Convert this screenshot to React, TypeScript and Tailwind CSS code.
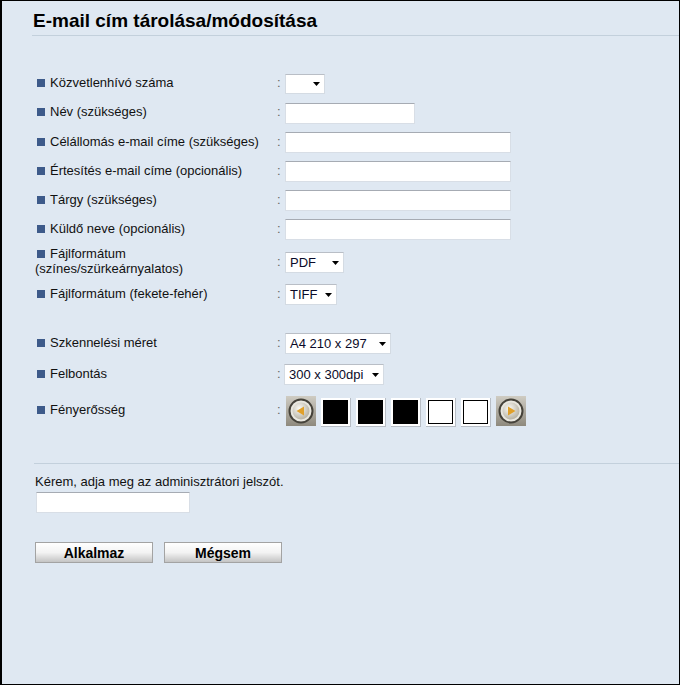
import React from 'react';

const Caret = () => (
  <svg width="7" height="4" viewBox="0 0 7 4" className="shrink-0">
    <path d="M0 0h7L3.5 4z" fill="#000" />
  </svg>
);

function FakeSelect({ value, width }: { value: string; width: string }) {
  return (
    <div
      className={`${width} h-[21px] bg-white border border-[#d4dbe3] border-t-[#b9bec6] flex items-center justify-between pl-[4px] pr-[4px] text-[13px] text-[#0a0a28]`}
    >
      <span>{value}</span>
      <Caret />
    </div>
  );
}

function ArrowButton({ dir }: { dir: 'left' | 'right' }) {
  const id = `g-${dir}`;
  return (
    <svg width="30" height="30" viewBox="0 0 30 30" className="shrink-0">
      <defs>
        <linearGradient id={`${id}-bg`} x1="0" y1="0" x2="0" y2="1">
          <stop offset="0" stopColor="#cfccc3" />
          <stop offset="1" stopColor="#8e897d" />
        </linearGradient>
        <radialGradient id={`${id}-in`} cx="0.4" cy="0.35" r="0.7">
          <stop offset="0" stopColor="#fbfaf5" />
          <stop offset="1" stopColor="#b3ae9f" />
        </radialGradient>
      </defs>
      <rect width="30" height="30" fill={`url(#${id}-bg)`} />
      <circle cx="15" cy="15" r="11.5" fill="#e9e7df" stroke="#45423a" strokeWidth="2" />
      <circle cx="15" cy="15" r="8.5" fill={`url(#${id}-in)`} />
      {dir === 'left' ? (
        <path d="M10.5 15L18 10.5v9z" fill="#e0a02a" />
      ) : (
        <path d="M19.5 15L12 10.5v9z" fill="#e0a02a" />
      )}
    </svg>
  );
}

function Row({
  label,
  height,
  children,
}: {
  label: React.ReactNode;
  height: string;
  children: React.ReactNode;
}) {
  return (
    <div className={`flex items-center ${height}`}>
      <div className="w-[242px] mb-[3px] leading-[15px] text-[13px] text-[#111]">
        <span className="inline-block w-[8px] h-[8px] bg-[#3d5a8a] ml-[2px] mr-[5px]"></span>
        {label}
      </div>
      <div className="w-[8px] text-[13px] text-[#666] mb-[2px]">:</div>
      {children}
    </div>
  );
}

const inputCls =
  'h-[21px] bg-white border border-[#d8dee6] border-t-[#a6abb3] outline-none';

export default function App() {
  const levels = [true, true, true, false, false];

  return (
    <div className="w-[680px] h-[685px] bg-[#dfe8f2] border-t border-r border-b border-l-2 border-black font-['Liberation_Sans',Arial,sans-serif] text-black">
      {/* Fejléc */}
      <h1 className="pl-[31px] pt-[9px] text-[19px] leading-[22px] font-bold">
        E-mail cím tárolása/módosítása
      </h1>
      <div className="ml-[30px] mt-[3px] h-px bg-[#c3d0dc]"></div>

      {/* Űrlap */}
      <div className="pl-[33px] mt-[34px]">
        <Row label="Közvetlenhívó száma" height="h-[28px]">
          <div className="w-[40px] h-[20px] bg-white border border-[#d4dbe3] border-t-[#b9bec6] flex items-center justify-end pr-[4px]">
            <Caret />
          </div>
        </Row>
        <Row label="Név (szükséges)" height="h-[30px]">
          <input className={`${inputCls} w-[130px] h-[20px]`} />
        </Row>
        <Row label="Célállomás e-mail címe (szükséges)" height="h-[29px]">
          <input className={`${inputCls} w-[226px]`} />
        </Row>
        <Row label="Értesítés e-mail címe (opcionális)" height="h-[29px]">
          <input className={`${inputCls} w-[226px]`} />
        </Row>
        <Row label="Tárgy (szükséges)" height="h-[29px]">
          <input className={`${inputCls} w-[226px]`} />
        </Row>
        <Row label="Küldő neve (opcionális)" height="h-[29px]">
          <input className={`${inputCls} w-[226px]`} />
        </Row>
        <Row
          label={
            <>
              Fájlformátum
              <br />
              (színes/szürkeárnyalatos)
            </>
          }
          height="h-[37px]"
        >
          <FakeSelect value="PDF" width="w-[59px]" />
        </Row>
        <Row label="Fájlformátum (fekete-fehér)" height="h-[27px]">
          <FakeSelect value="TIFF" width="w-[52px]" />
        </Row>

        <div className="h-[21px]"></div>

        <Row label="Szkennelési méret" height="h-[29px]">
          <FakeSelect value="A4 210 x 297" width="w-[106px]" />
        </Row>
        <Row label="Felbontás" height="h-[33px]">
          <div className="-ml-px">
            <FakeSelect value="300 x 300dpi" width="w-[100px]" />
          </div>
        </Row>
        <Row label="Fényerősség" height="h-[40px]">
          <div className="flex items-center gap-[5px] ml-px">
            <ArrowButton dir="left" />
            {levels.map((on, i) => (
              <div
                key={i}
                className="w-[30px] h-[29px] mt-[3px] bg-white p-[2px] border-b border-r border-[#b8bec6]"
              >
                <div
                  className={`w-full h-full border border-black ${on ? 'bg-black' : 'bg-white'}`}
                ></div>
              </div>
            ))}
            <ArrowButton dir="right" />
          </div>
        </Row>
      </div>

      {/* Jelszó */}
      <div className="ml-[32px] mt-[32px] h-px bg-[#c3d0dc]"></div>
      <div className="pl-[33px]">
        <p className="mt-[10px] text-[13px] leading-[15px] text-[#111]">
          Kérem, adja meg az adminisztrátori jelszót.
        </p>
        <input type="password" className={`${inputCls} w-[154px] mt-[3px] ml-px block`} />

        <div className="flex gap-[11px] mt-[29px]">
          <button className="w-[118px] h-[21px] border border-[#a3a3a3] bg-gradient-to-b from-white via-[#f3f3f3] to-[#c4c4c4] text-[14px] font-bold leading-none">
            Alkalmaz
          </button>
          <button className="w-[118px] h-[21px] border border-[#a3a3a3] bg-gradient-to-b from-white via-[#f3f3f3] to-[#c4c4c4] text-[14px] font-bold leading-none">
            Mégsem
          </button>
        </div>
      </div>
    </div>
  );
}
